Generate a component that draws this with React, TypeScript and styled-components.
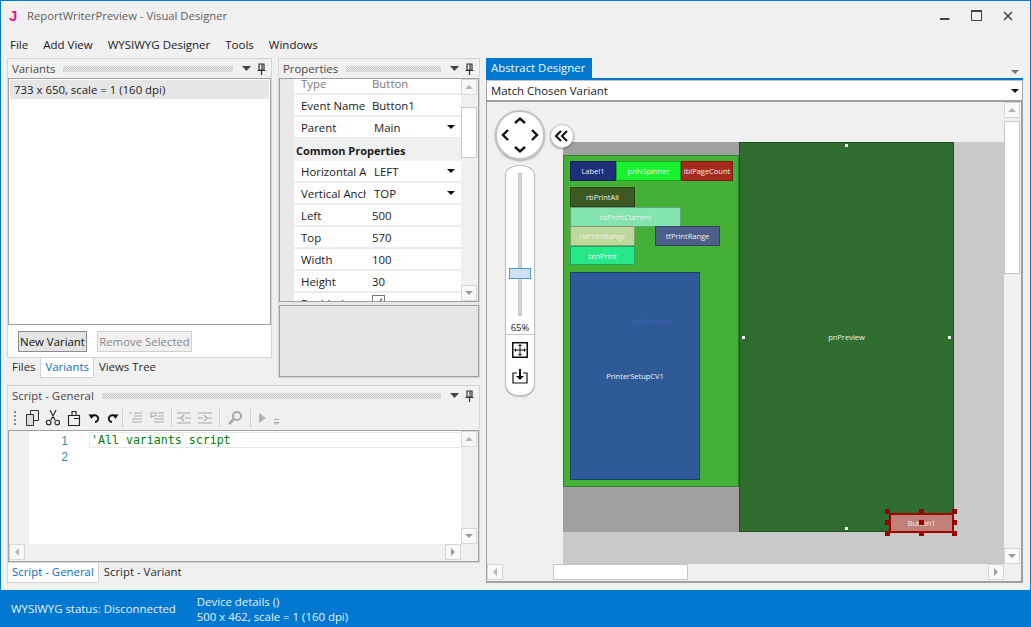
import React from "react";
import styled, { createGlobalStyle } from "styled-components";

const Global = createGlobalStyle`
  html, body { margin: 0; padding: 0; }
  body { background: #f0f0f0; font-family: "Open Sans", "Noto Sans", sans-serif; font-size: 11.4px; color: #1a1a1a; }
  * { box-sizing: border-box; }
`;

const Win = styled.div`
  width: 1031px;
  height: 627px;
  display: flex;
  flex-direction: column;
  border: 1px solid #0078d7;
  border-bottom: 0;
  background: #f0f0f0;
  overflow: hidden;
`;

const TitleBar = styled.div`
  height: 29px;
  display: flex;
  align-items: center;
  padding-left: 8px;
  color: #5f5f5f;
  font-size: 11.3px;
`;

const Logo = styled.span`
  width: 18px;
  color: #e0238c;
  font: bold 15px "Liberation Sans", sans-serif;
`;

const WinButtons = styled.div`
  margin-left: auto;
  display: flex;
  align-items: center;
  gap: 21px;
  padding-right: 17px;
`;

const MenuBar = styled.div`
  height: 28px;
  display: flex;
  align-items: center;
  gap: 15px;
  padding-left: 9px;
  font-size: 11.5px;
`;

const Main = styled.div`
  flex: 1;
  display: flex;
  gap: 6px;
  padding: 0 7px 7px 6px;
  min-height: 0;
`;

const LeftArea = styled.div`
  width: 473px;
  display: flex;
  flex-direction: column;
  gap: 7px;
`;

const TopRow = styled.div`
  height: 320px;
  flex: none;
  display: flex;
  gap: 6px;
`;

const Column = styled.div<{ $w: number; $grow?: boolean }>`
  width: ${(p) => p.$w}px;
  display: flex;
  flex-direction: column;
  ${(p) => (p.$grow ? "flex: 1; min-height: 0;" : "")}
`;

const Panel = styled.div`
  flex: 1;
  min-height: 0;
  display: flex;
  flex-direction: column;
  background: #fff;
  border: 1px solid #d4d4d4;
`;

const PanelHead = styled.div`
  height: 19px;
  flex: none;
  display: flex;
  align-items: center;
  gap: 6px;
  padding: 0 5px 0 4px;
  background: #f0f0f0;
  color: #4a4a4a;
  white-space: nowrap;
`;

const Grip = styled.div`
  flex: 1;
  height: 6px;
  margin: 0 3px 0 2px;
  background: conic-gradient(#c4c4c4 25%, transparent 0 50%, #c4c4c4 0 75%, transparent 0) 0 0 / 2px 2px;
`;

const VariantList = styled.div`
  flex: 1;
  border: 1px solid #a0a0a0;
  padding: 1px;
  background: #fff;
`;

const SelectedRow = styled.div`
  height: 19px;
  line-height: 19px;
  padding-left: 4px;
  background: #e6e6e6;
  color: #222;
`;

const ButtonRow = styled.div`
  height: 32px;
  flex: none;
  display: flex;
  align-items: center;
  gap: 10px;
  padding: 0 0 0 10px;
`;

const PushButton = styled.div<{ $off?: boolean; $w: number }>`
  width: ${(p) => p.$w}px;
  height: 21px;
  line-height: 19px;
  text-align: center;
  white-space: nowrap;
  border: 1px solid ${(p) => (p.$off ? "#d0d0d0" : "#8c8c8c")};
  background: ${(p) => (p.$off ? "#f0f0f0" : "#e4e4e4")};
  color: ${(p) => (p.$off ? "#8a8a8a" : "#111")};
`;

const Tabs = styled.div`
  height: 20px;
  flex: none;
  display: flex;
`;

const Tab = styled.div<{ $on?: boolean }>`
  padding: 0 4px;
  line-height: 18px;
  white-space: nowrap;
  color: ${(p) => (p.$on ? "#0a6cc4" : "#2a2a2a")};
  background: ${(p) => (p.$on ? "#fff" : "transparent")};
  border: 1px solid ${(p) => (p.$on ? "#d4d4d4" : "transparent")};
  border-top: 0;
`;

const PropsBody = styled.div`
  height: 223px;
  flex: none;
  display: flex;
  border: 1px solid #a0a0a0;
  border-bottom: 0;
  overflow: hidden;
  background: #e9e9e9;
`;

const PropsGutter = styled.div`
  width: 14px;
  flex: none;
`;

const PropsList = styled.div`
  flex: 1;
  min-width: 0;
  overflow: hidden;
`;

const PropsInner = styled.div`
  margin-top: -6px;
`;

const PropRow = styled.div<{ $dim?: boolean }>`
  height: 22px;
  display: flex;
  align-items: center;
  background: #fff;
  border-bottom: 2px solid #ececec;
  color: ${(p) => (p.$dim ? "#7c7c7c" : "#1a1a1a")};
`;

const PropName = styled.div`
  width: 72px;
  padding-left: 7px;
  overflow: hidden;
  white-space: nowrap;
  flex: none;
`;

const PropValue = styled.div<{ $combo?: boolean }>`
  flex: 1;
  display: flex;
  align-items: center;
  justify-content: space-between;
  padding: 0 6px 0 ${(p) => (p.$combo ? 8 : 6)}px;
  white-space: nowrap;
`;

const Category = styled.div`
  height: 22px;
  margin-left: -14px;
  padding-left: 4px;
  display: flex;
  align-items: center;
  gap: 4px;
  background: #f0f0f0;
  font-size: 11px;
  font-weight: 700;
  white-space: nowrap;
`;

const CheckBox = styled.span`
  width: 13px;
  height: 13px;
  margin-top: -3px;
  border: 1px solid #777;
  background: #fff;
  display: flex;
  align-items: center;
  justify-content: center;
`;

const DropArrow = styled.span`
  width: 0;
  height: 0;
  border-left: 4px solid transparent;
  border-right: 4px solid transparent;
  border-top: 4px solid #111;
`;

const VBar = styled.div`
  width: 17px;
  flex: none;
  background: #f0f0f0;
  display: flex;
  flex-direction: column;
`;

const ScrollBtn = styled.div`
  width: 16px;
  height: 16px;
  flex: none;
  border: 1px solid #d6d6d6;
  background: #f8f8f8;
  display: flex;
  align-items: center;
  justify-content: center;
`;

const Tri = styled.span<{ $dir: "up" | "down" | "left" | "right" }>`
  width: 0;
  height: 0;
  ${(p) =>
    p.$dir === "up"
      ? "border-left:4px solid transparent;border-right:4px solid transparent;border-bottom:4px solid #b4b4b4;"
      : p.$dir === "down"
      ? "border-left:4px solid transparent;border-right:4px solid transparent;border-top:4px solid #9a9a9a;"
      : p.$dir === "left"
      ? "border-top:4px solid transparent;border-bottom:4px solid transparent;border-right:4px solid #b4b4b4;"
      : "border-top:4px solid transparent;border-bottom:4px solid transparent;border-left:4px solid #9a9a9a;"}
`;

const VThumb = styled.div<{ $top: number; $h: number }>`
  width: 16px;
  height: ${(p) => p.$h}px;
  margin-top: ${(p) => p.$top}px;
  flex: none;
  background: #fff;
  border: 1px solid #c6c6c6;
`;

const Spacer = styled.div`
  flex: 1;
`;

const Corner = styled.div`
  width: 17px;
  flex: none;
`;

const Splitter = styled.div`
  height: 5px;
  flex: none;
  border-top: 1px solid #a0a0a0;
  border-bottom: 1px solid #a0a0a0;
  background: #e8e8e8;
`;

const PropsHelp = styled.div`
  flex: 1;
  background: #e6e6e6;
  border: 1px solid #a0a0a0;
  border-top: 0;
`;

const ToolBar = styled.div`
  height: 25px;
  flex: none;
  display: flex;
  align-items: center;
  padding-left: 6px;
  background: #f0f0f0;
`;

const ToolSlot = styled.div<{ $ml: number }>`
  margin-left: ${(p) => p.$ml}px;
  height: 16px;
  display: flex;
  flex: none;
`;

const ToolSep = styled.div<{ $ml: number }>`
  width: 1px;
  height: 18px;
  margin-left: ${(p) => p.$ml}px;
  background: #d0d0d0;
  flex: none;
`;

const Editor = styled.div`
  flex: 1;
  min-height: 0;
  display: flex;
  flex-direction: column;
  border: 1px solid #a0a0a0;
  background: #f0f0f0;
`;

const EditorTop = styled.div`
  flex: 1;
  min-height: 0;
  display: flex;
`;

const EditorGutter = styled.div`
  width: 20px;
  flex: none;
`;

const LineNumbers = styled.div`
  width: 41px;
  flex: none;
  background: #fff;
  text-align: right;
  padding: 2px 2px 0 0;
  color: #2b91af;
  font: 12px/16px "Liberation Sans", sans-serif;
`;

const Code = styled.div`
  flex: 1;
  background: #fff;
  padding-left: 19px;
`;

const CodeLine = styled.div`
  height: 16px;
  margin: 1px 0 0 0;
  padding-left: 1px;
  border: 1px solid #e8e8e8;
  border-right: 0;
  color: #008000;
  font: 11.6px/14px "DejaVu Sans Mono", "Liberation Mono", monospace;
  white-space: pre;
`;

const HBar = styled.div`
  height: 17px;
  flex: none;
  display: flex;
  background: #f0f0f0;
`;

const HThumb = styled.div<{ $left: number; $w: number }>`
  height: 16px;
  width: ${(p) => p.$w}px;
  margin-left: ${(p) => p.$left}px;
  background: #fff;
  border: 1px solid #c6c6c6;
`;

const StatusBar = styled.div`
  height: 37px;
  flex: none;
  margin: 0 -1px;
  display: flex;
  align-items: center;
  gap: 21px;
  padding-left: 11px;
  background: #0078d0;
  color: #e8f2fb;
  line-height: 15px;
`;

const Designer = styled.div`
  flex: 1;
  min-width: 0;
  display: flex;
  flex-direction: column;
`;

const DesignerTabs = styled.div`
  height: 22px;
  flex: none;
  display: flex;
  justify-content: space-between;
  align-items: flex-end;
  border-bottom: 2px solid #0078d0;
`;

const DesignerTab = styled.div`
  width: 106px;
  height: 20px;
  background: #0078d0;
  color: #f2f8fd;
  padding-left: 5px;
  line-height: 20px;
`;

const OverflowArrow = styled.span`
  margin: 0 4px 4px 0;
  width: 0;
  height: 0;
  border-left: 4px solid transparent;
  border-right: 4px solid transparent;
  border-top: 4px solid #777;
`;

const Combo = styled.div`
  height: 22px;
  flex: none;
  display: flex;
  align-items: center;
  justify-content: space-between;
  padding: 0 3px 0 4px;
  background: #fff;
  border: 1px solid #a0a0a0;
  border-top: 1px solid #c0c0c0;
  border-bottom: 2px solid #a0a0a0;
`;

const DesignerBody = styled.div`
  flex: 1;
  min-height: 0;
  display: flex;
  flex-direction: column;
  border-style: solid;
  border-color: #a0a0a0;
  border-width: 0 2px 2px 1px;
  background: #f0f0f0;
`;

const DesignerMid = styled.div`
  flex: 1;
  min-height: 0;
  display: flex;
`;

const Viewport = styled.div`
  flex: 1;
  position: relative;
  overflow: hidden;
  background: #f0f0f0;
`;

const Canvas = styled.div`
  position: absolute;
  left: 76px;
  top: 40px;
  width: 442px;
  height: 423px;
  background: #c9c9c9;
`;

const Node = styled.div<{ $x: number; $y: number; $w: number; $h: number; $bg: string; $flat?: boolean }>`
  position: absolute;
  left: ${(p) => p.$x}px;
  top: ${(p) => p.$y}px;
  width: ${(p) => p.$w}px;
  height: ${(p) => p.$h}px;
  background: ${(p) => p.$bg};
  color: #f0f0f0;
  border: ${(p) => (p.$flat ? "0" : "1px solid rgba(0, 0, 0, 0.28)")};
  display: flex;
  align-items: center;
  justify-content: center;
  font-size: 7.5px;
  white-space: nowrap;
  overflow: hidden;
`;

const Label = styled.span<{ $x: number; $y: number; $fg: string }>`
  position: absolute;
  left: ${(p) => p.$x}px;
  top: ${(p) => p.$y}px;
  color: ${(p) => p.$fg};
  font-size: 7.5px;
  line-height: 10px;
`;

const Dot = styled.span<{ $x: number; $y: number }>`
  position: absolute;
  left: ${(p) => p.$x}px;
  top: ${(p) => p.$y}px;
  width: 3px;
  height: 3px;
  background: #f4f4f4;
`;

const Selection = styled.div`
  position: absolute;
  left: 326px;
  top: 371px;
  width: 65px;
  height: 20px;
  border: 2px solid #a00000;
  background: #c07f79;
  color: #eee;
  font-size: 7.5px;
  display: flex;
  align-items: center;
  justify-content: center;
`;

const Handle = styled.span<{ $x: number; $y: number }>`
  position: absolute;
  left: ${(p) => p.$x}px;
  top: ${(p) => p.$y}px;
  width: 5px;
  height: 5px;
  background: #960000;
`;

const NavPad = styled.div`
  position: absolute;
  left: 8px;
  top: 8px;
  width: 50px;
  height: 50px;
  border-radius: 50%;
  background: #fff;
  border: 2px solid #c4c4c4;
  box-shadow: 0 1px 2px rgba(0, 0, 0, 0.35);
`;

const CollapseBtn = styled.div`
  position: absolute;
  left: 63px;
  top: 22px;
  width: 24px;
  height: 24px;
  border-radius: 50%;
  background: #fff;
  border: 1px solid #c4c4c4;
  box-shadow: 0 1px 2px rgba(0, 0, 0, 0.35);
  display: flex;
  align-items: center;
  justify-content: center;
`;

const ZoomRail = styled.div`
  position: absolute;
  left: 18px;
  top: 63px;
  width: 30px;
  height: 231px;
  background: #fff;
  border: 1px solid #c0c0c0;
  border-radius: 14px 14px 14px 14px / 10px 10px 12px 12px;
  box-shadow: 0 1px 1px rgba(0, 0, 0, 0.25);
  display: flex;
  flex-direction: column;
  align-items: center;
`;

const Track = styled.div`
  position: relative;
  width: 4px;
  height: 143px;
  margin-top: 7px;
  flex: none;
  background: #d6d6d6;
  border: 1px solid #c4c4c4;
`;

const Thumb = styled.div`
  position: absolute;
  left: -10px;
  top: 94px;
  width: 22px;
  height: 11px;
  background: #cfe0f0;
  border: 1px solid #4a9ae0;
`;

const Percent = styled.div`
  margin-top: 5px;
  height: 14px;
  width: 100%;
  text-align: center;
  font-size: 9.5px;
  line-height: 14px;
  color: #222;
  border-bottom: 1px solid #c4c4c4;
  flex: none;
`;

const RailIcon = styled.div<{ $top: number }>`
  height: 16px;
  width: 100%;
  flex: none;
  display: flex;
  align-items: center;
  justify-content: center;
  margin-top: ${(p) => p.$top}px;
`;

const Up = () => <ScrollBtn><Tri $dir="up" /></ScrollBtn>;
const Down = () => <ScrollBtn><Tri $dir="down" /></ScrollBtn>;

const Pin = () => (
  <svg width="9" height="12" viewBox="0 0 9 12">
    <path d="M2 1h5v6H2zM5 1.500v5M0.500 7.500h8M4.500 8v4" fill="none" stroke="#333" strokeWidth="1.2" />
  </svg>
);

const MenuArrow = () => (
  <svg width="9" height="5" viewBox="0 0 9 5"><path d="M0 0h9L4.500 5z" fill="#444" /></svg>
);

const Head = ({ title }: { title: string }) => (
  <PanelHead>
    <span>{title}</span>
    <Grip />
    <MenuArrow />
    <Pin />
  </PanelHead>
);

const ToolIcon = ({ d, ml, c }: { d: string; ml: number; c: string }) => (
  <ToolSlot $ml={ml}>
    <svg width="16" height="16" viewBox="0 0 16 16">
      <path d={d} fill="none" stroke={c} strokeWidth="1.1" />
    </svg>
  </ToolSlot>
);

const Toolbar = () => (
  <ToolBar>
    <svg width="2" height="16"><path d="M1 1v14" stroke="#888" strokeWidth="2" strokeDasharray="2 2" /></svg>
    <ToolSlot $ml={8}>
      <svg width="16" height="16" viewBox="0 0 16 16">
        <path d="M6.500 .5h8v10h-8z" fill="none" stroke="#333" />
        <path d="M2.500 4.500h7v11h-7z" fill="#dcdcdc" stroke="#333" />
      </svg>
    </ToolSlot>
    <ToolIcon ml={5} c="#222" d="M5 0l5 10M11 0L6 10M6 12.500a2.300 2.300 0 1 1-4.600 0 2.300 2.300 0 0 1 4.600 0zM14.500 12.500a2.300 2.300 0 1 1-4.600 0 2.300 2.300 0 0 1 4.600 0z" />
    <ToolIcon ml={5} c="#222" d="M2.500 5.500h11v10h-11zM6 5V1.500h4V5M8 8.500h5.500" />
    <ToolSlot $ml={6}>
      <svg width="13" height="16" viewBox="0 0 13 16">
        <path d="M3.500 7a3.600 3.400 0 1 1 3.500 5" fill="none" stroke="#111" strokeWidth="1.900" />
        <path d="M.500 4.500h5.500L3.500 9z" fill="#111" />
      </svg>
    </ToolSlot>
    <ToolSlot $ml={5}>
      <svg width="13" height="16" viewBox="0 0 13 16">
        <path d="M9.500 7a3.600 3.400 0 1 0-3.500 5" fill="none" stroke="#111" strokeWidth="1.900" />
        <path d="M12.500 4.500H7L9.500 9z" fill="#111" />
      </svg>
    </ToolSlot>
    <ToolSep $ml={3} />
    <ToolIcon ml={5} c="#a8b0a8" d="M1 3h3M6 3h8M6 6h8M4 9h10M4 12h10" />
    <ToolIcon ml={6} c="#a8b0a8" d="M1 3h5v3H3L1 7.500zM8 3h6M8 6h6M4 9h10M4 12h10" />
    <ToolSep $ml={5} />
    <ToolIcon ml={4} c="#a8a8a8" d="M1 3h14M1 13h14M1 8h5M9 8h6M8 5L5 8l3 3" />
    <ToolIcon ml={5} c="#a8a8a8" d="M1 3h14M1 13h14M1 8h5M9 8h6M7 5l3 3-3 3" />
    <ToolSep $ml={6} />
    <ToolSlot $ml={7}>
      <svg width="16" height="16" viewBox="0 0 16 16">
        <circle cx="10" cy="6" r="4" fill="none" stroke="#a8a8a8" strokeWidth="2" />
        <path d="M7 9l-5 5" stroke="#a8a8a8" strokeWidth="2.600" />
      </svg>
    </ToolSlot>
    <ToolSep $ml={7} />
    <ToolSlot $ml={3}>
      <svg width="16" height="16" viewBox="0 0 16 16"><path d="M5 3l7 5-7 5z" fill="#b4b4b4" /></svg>
    </ToolSlot>
    <ToolSlot $ml={3}>
      <svg width="8" height="16" viewBox="0 0 8 16"><path d="M1 9.500h5M1 12.500h5l-2.500 2z" fill="none" stroke="#a8a8a8" /></svg>
    </ToolSlot>
  </ToolBar>
);

const nodes = [
  { t: "Label1", x: 7, y: 19, w: 46, h: 20, bg: "#1c2f78" },
  { t: "pnNSpinner", x: 53, y: 19, w: 65, h: 20, bg: "#18f030" },
  { t: "lblPageCount", x: 118, y: 19, w: 52, h: 20, bg: "#a82a1c" },
  { t: "rbPrintAll", x: 7, y: 45, w: 65, h: 20, bg: "#3e5a24" },
  { t: "rbPrintCurrent", x: 7, y: 65, w: 111, h: 20, bg: "#84e4b0" },
  { t: "rbPrintRange", x: 7, y: 84, w: 65, h: 20, bg: "#bcd89a" },
  { t: "tfPrintRange", x: 92, y: 84, w: 65, h: 20, bg: "#4a5f8a" },
  { t: "btnPrint", x: 7, y: 104, w: 65, h: 19, bg: "#26e888" },
];

const handles = [
  [322, 367], [356, 367], [389, 367],
  [322, 378], [356, 378], [389, 378],
  [322, 389], [356, 389], [389, 389],
];

export default function App() {
  return (
    <Win>
      <Global />
      <TitleBar>
        <Logo>J</Logo>
        <span>ReportWriterPreview - Visual Designer</span>
        <WinButtons>
          <svg width="10" height="10" viewBox="0 0 10 10"><path d="M0 8h9.500" stroke="#444" strokeWidth="2" /></svg>
          <svg width="11" height="11" viewBox="0 0 11 11"><path d="M.5 1.500h10v9H.500z" fill="none" stroke="#444" /><path d="M0 1h11" stroke="#444" strokeWidth="2" /></svg>
          <svg width="10" height="10" viewBox="0 0 10 10"><path d="M1 1l8 8M9 1l-8 8" stroke="#444" strokeWidth="1.600" /></svg>
        </WinButtons>
      </TitleBar>
      <MenuBar>
        <span>File</span>
        <span>Add View</span>
        <span>WYSIWYG Designer</span>
        <span>Tools</span>
        <span>Windows</span>
      </MenuBar>
      <Main>
        <LeftArea>
          <TopRow>
            <Column $w={265}>
              <Panel>
                <Head title="Variants" />
                <VariantList>
                  <SelectedRow>733 x 650, scale = 1 (160 dpi)</SelectedRow>
                </VariantList>
                <ButtonRow>
                  <PushButton $w={69}>New Variant</PushButton>
                  <PushButton $w={95} $off>Remove Selected</PushButton>
                </ButtonRow>
              </Panel>
              <Tabs>
                <Tab>Files</Tab>
                <Tab $on>Variants</Tab>
                <Tab>Views Tree</Tab>
              </Tabs>
            </Column>
            <Column $w={202}>
              <Panel>
                <Head title="Properties" />
                <PropsBody>
                  <PropsGutter />
                  <PropsList>
                    <PropsInner>
                      <PropRow $dim><PropName>Type</PropName><PropValue>Button</PropValue></PropRow>
                      <PropRow><PropName>Event Name</PropName><PropValue>Button1</PropValue></PropRow>
                      <PropRow><PropName>Parent</PropName><PropValue $combo>Main<DropArrow /></PropValue></PropRow>
                      <Category>
                        <svg width="8" height="8" viewBox="0 0 8 8"><path d="M7 1v6H1z" fill="#333" /></svg>
                        Common Properties
                      </Category>
                      <PropRow><PropName>Horizontal Anchor</PropName><PropValue $combo>LEFT<DropArrow /></PropValue></PropRow>
                      <PropRow><PropName>Vertical Anchor</PropName><PropValue $combo>TOP<DropArrow /></PropValue></PropRow>
                      <PropRow><PropName>Left</PropName><PropValue>500</PropValue></PropRow>
                      <PropRow><PropName>Top</PropName><PropValue>570</PropValue></PropRow>
                      <PropRow><PropName>Width</PropName><PropValue>100</PropValue></PropRow>
                      <PropRow><PropName>Height</PropName><PropValue>30</PropValue></PropRow>
                      <PropRow>
                        <PropName>Enabled</PropName>
                        <PropValue>
                          <CheckBox>
                            <svg width="9" height="9" viewBox="0 0 9 9"><path d="M1 5l2.500 2.500L8 1.500" fill="none" stroke="#666" strokeWidth="1.300" /></svg>
                          </CheckBox>
                        </PropValue>
                      </PropRow>
                    </PropsInner>
                  </PropsList>
                  <VBar>
                    <Up />
                    <VThumb $top={12} $h={51} />
                    <Spacer />
                    <Down />
                  </VBar>
                </PropsBody>
                <Splitter />
                <PropsHelp />
              </Panel>
            </Column>
          </TopRow>
          <Column $w={473} $grow>
            <Panel>
              <Head title="Script - General" />
              <Toolbar />
              <Editor>
                <EditorTop>
                  <EditorGutter />
                  <LineNumbers>1<br />2</LineNumbers>
                  <Code><CodeLine>'All variants script</CodeLine></Code>
                  <VBar><Up /><Spacer /><Down /></VBar>
                </EditorTop>
                <HBar>
                  <ScrollBtn><Tri $dir="left" /></ScrollBtn>
                  <Spacer />
                  <ScrollBtn><Tri $dir="right" /></ScrollBtn>
                  <Corner />
                </HBar>
              </Editor>
            </Panel>
            <Tabs>
              <Tab $on>Script - General</Tab>
              <Tab>Script - Variant</Tab>
            </Tabs>
          </Column>
        </LeftArea>
        <Designer>
          <DesignerTabs>
            <DesignerTab>Abstract Designer</DesignerTab>
            <OverflowArrow />
          </DesignerTabs>
          <Combo>Match Chosen Variant<DropArrow /></Combo>
          <DesignerBody>
            <DesignerMid>
              <Viewport>
                <Canvas>
                  <Node $x={0} $y={0} $w={176} $h={390} $bg="#a0a0a0" $flat />
                  <Node $x={0} $y={13} $w={176} $h={332} $bg="#44b035" />
                  {nodes.map((n) => (
                    <Node key={n.t} $x={n.x} $y={n.y} $w={n.w} $h={n.h} $bg={n.bg}>{n.t}</Node>
                  ))}
                  <Node $x={7} $y={130} $w={130} $h={208} $bg="#2e5a98">PrinterSetupCV1</Node>
                  <Label $x={69} $y={174} $fg="#4560c0">pnControls</Label>
                  <Node $x={176} $y={0} $w={215} $h={390} $bg="#2f6e2e">pnPreview</Node>
                  <Dot $x={282} $y={2} />
                  <Dot $x={179} $y={194} />
                  <Dot $x={385} $y={194} />
                  <Dot $x={282} $y={385} />
                  <Selection>Button1</Selection>
                  {handles.map(([x, y]) => <Handle key={`${x}-${y}`} $x={x} $y={y} />)}
                </Canvas>
                <NavPad>
                  <svg width="46" height="46" viewBox="0 0 46 46">
                    <path d="M18 11l5-4.500 5 4.500M18 35l5 4.500 5-4.500M11 18l-5 5 5 5M35 18l5 5-5 5" fill="none" stroke="#111" strokeWidth="2.400" />
                  </svg>
                </NavPad>
                <CollapseBtn>
                  <svg width="14" height="12" viewBox="0 0 14 12"><path d="M6 1L1 6l5 5M12 1L7 6l5 5" fill="none" stroke="#111" strokeWidth="2" /></svg>
                </CollapseBtn>
                <ZoomRail>
                  <Track><Thumb /></Track>
                  <Percent>65%</Percent>
                  <RailIcon $top={7}>
                    <svg width="16" height="16" viewBox="0 0 16 16">
                      <path d="M.750.750h14.500v14.500H.750z" fill="none" stroke="#111" strokeWidth="1.500" />
                      <path d="M8 3v10M3 8h10" stroke="#111" />
                      <path d="M8 2l2 2H6zM8 14l2-2H6zM2 8l2-2v4zM14 8l-2-2v4z" fill="#111" />
                    </svg>
                  </RailIcon>
                  <RailIcon $top={10}>
                    <svg width="16" height="16" viewBox="0 0 16 16">
                      <path d="M5 5H1v10h14V5h-4" fill="none" stroke="#111" strokeWidth="1.200" />
                      <path d="M8 1v9" stroke="#111" strokeWidth="2" />
                      <path d="M4 8h8l-4 4z" fill="#111" />
                    </svg>
                  </RailIcon>
                </ZoomRail>
              </Viewport>
              <VBar>
                <Up />
                <VThumb $top={3} $h={153} />
                <Spacer />
                <Down />
              </VBar>
            </DesignerMid>
            <HBar>
              <ScrollBtn><Tri $dir="left" /></ScrollBtn>
              <HThumb $left={50} $w={135} />
              <Spacer />
              <ScrollBtn><Tri $dir="right" /></ScrollBtn>
              <Corner />
            </HBar>
          </DesignerBody>
        </Designer>
      </Main>
      <StatusBar>
        <span>WYSIWYG status: Disconnected</span>
        <div>Device details ()<br />500 x 462, scale = 1 (160 dpi)</div>
      </StatusBar>
    </Win>
  );
}
